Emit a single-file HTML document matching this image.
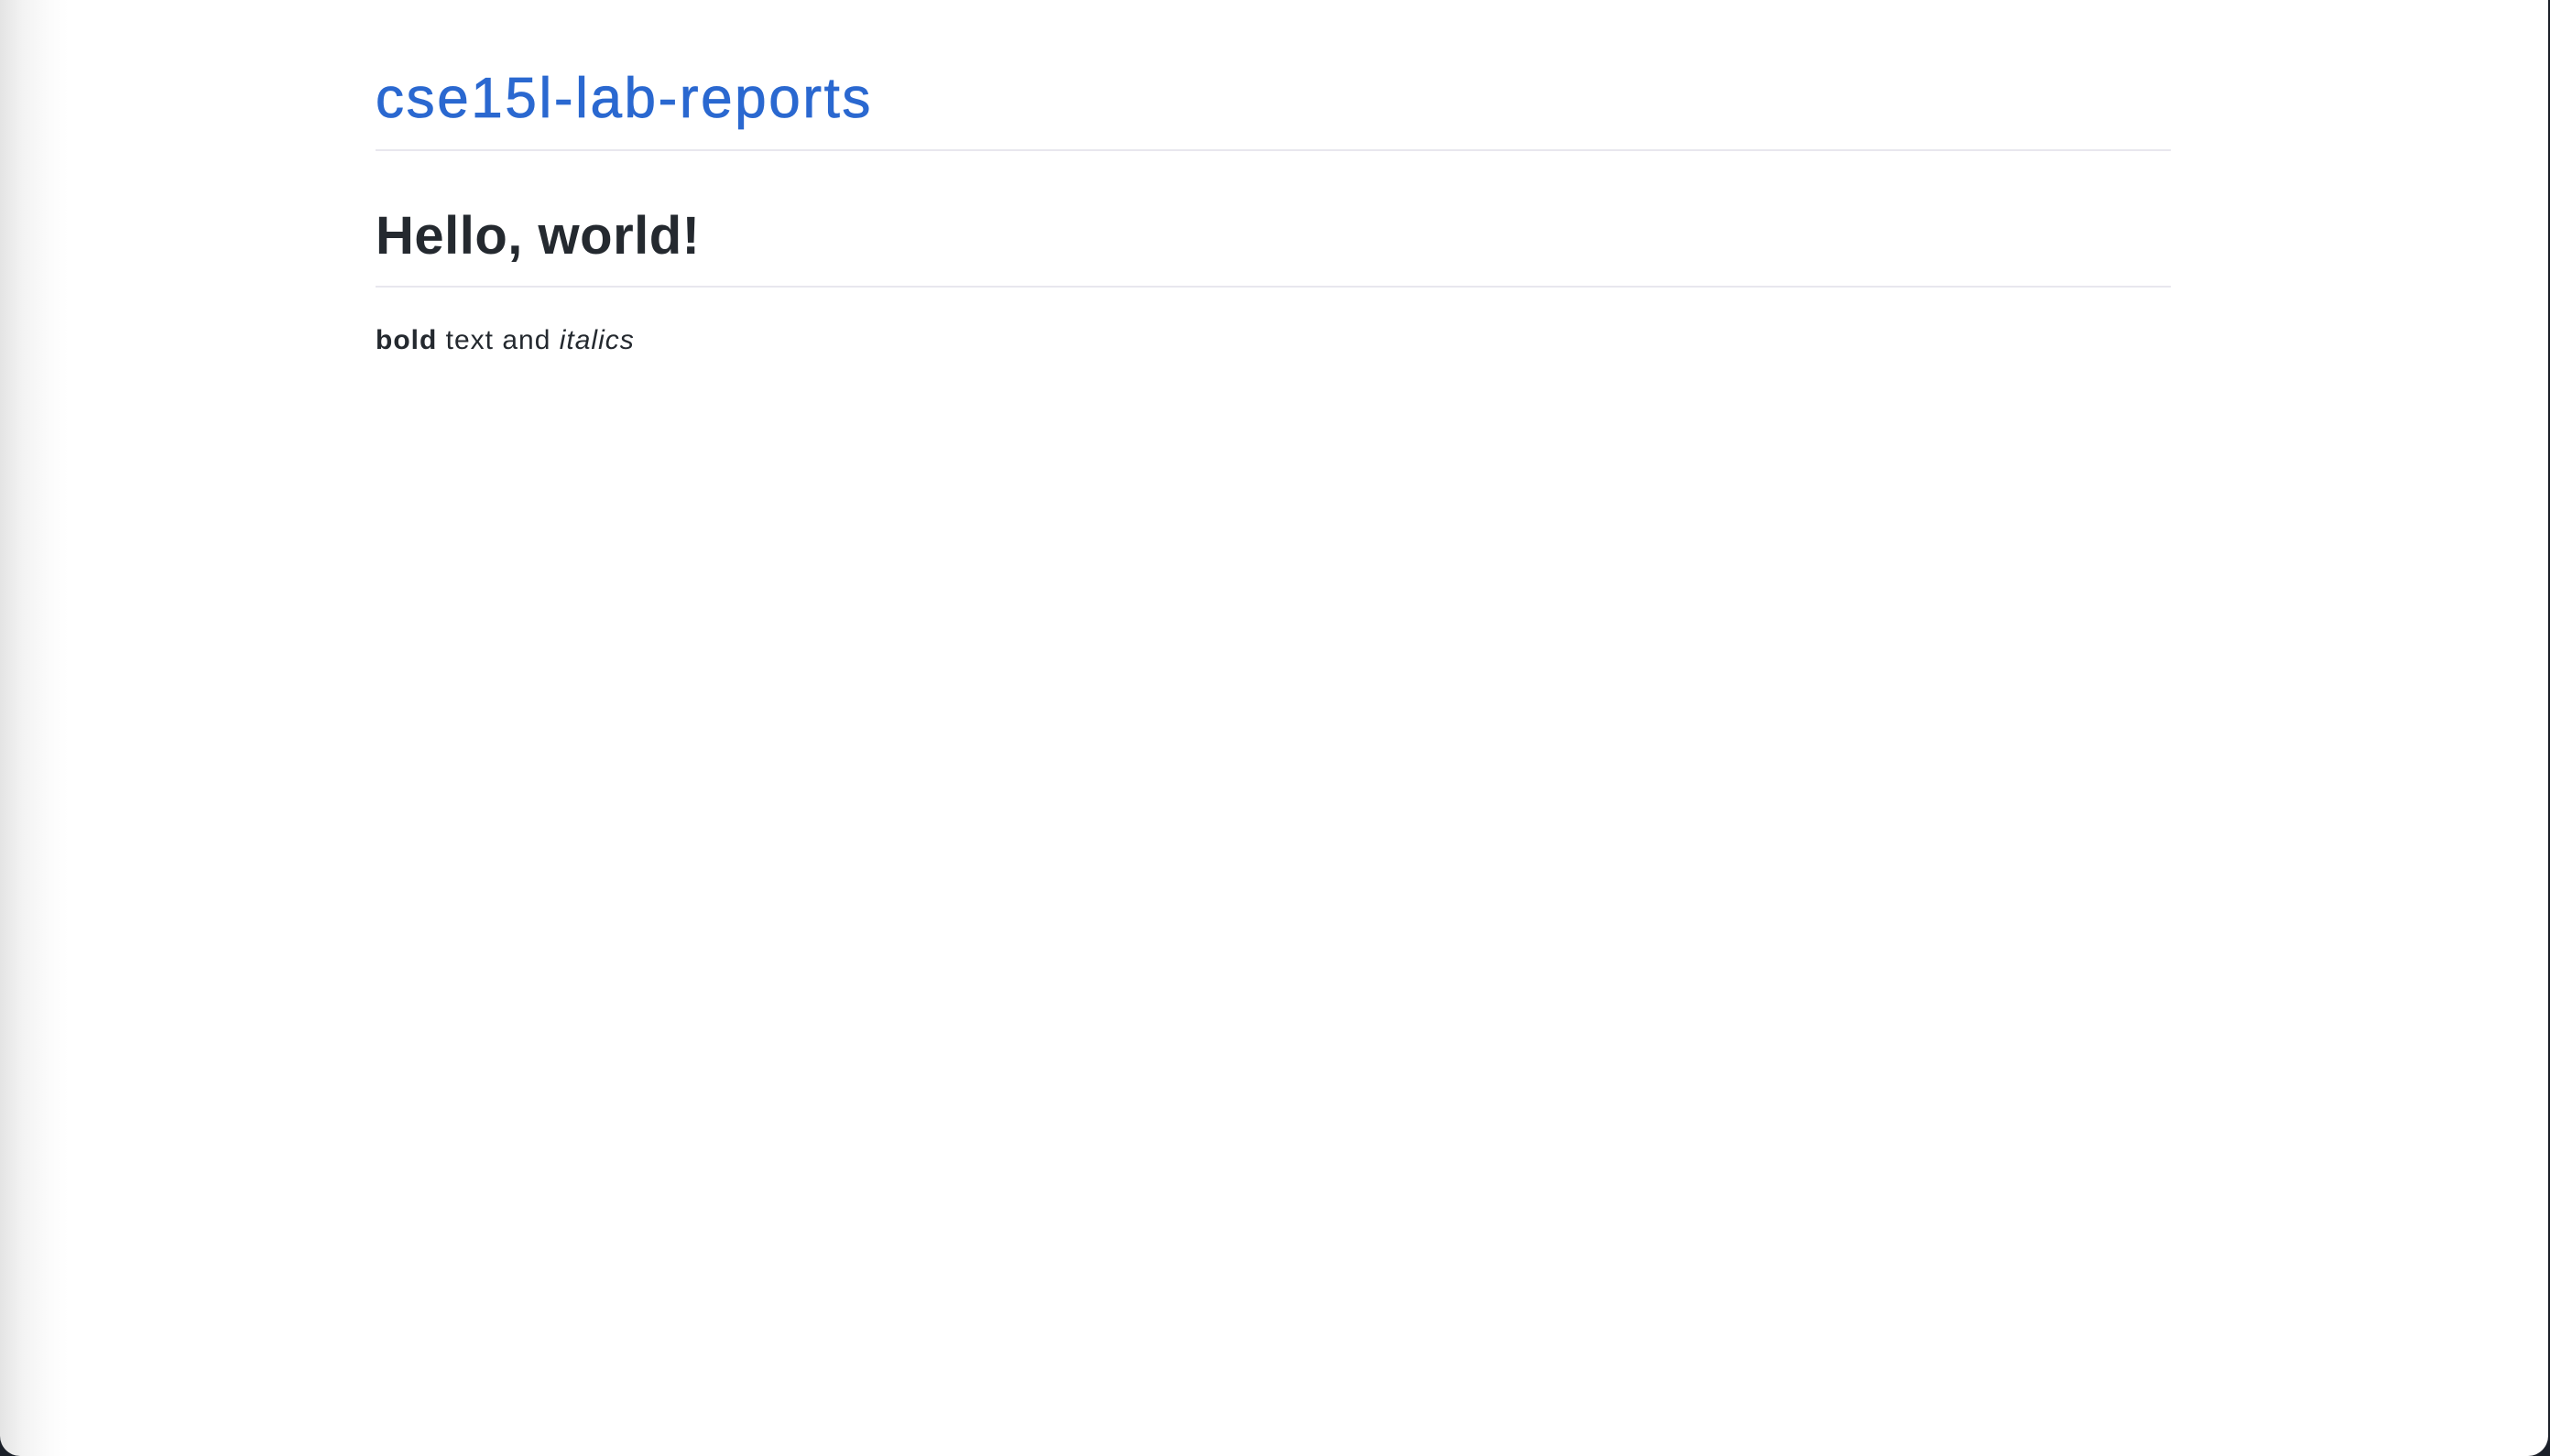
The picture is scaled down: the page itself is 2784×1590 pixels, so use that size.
<!DOCTYPE html>
<html><head><meta charset="utf-8"><style>
html,body{margin:0;padding:0;background:#1b2029;}
.win{position:absolute;left:0;top:0;width:2782px;height:1590px;background:#fff;border-radius:0 0 22px 22px;overflow:hidden;
background:linear-gradient(to right,#e4e4e4 0px,#f3f3f3 25px,#fcfcfc 55px,#fff 75px);}
.t{position:absolute;left:410px;white-space:nowrap;font-family:"Liberation Sans",sans-serif;line-height:1;}
.title{top:77px;font-size:62px;color:#2a68d0;letter-spacing:2.6px;-webkit-text-stroke:0.8px #2a68d0;}
.h1{top:229px;font-size:58px;font-weight:bold;color:#24292f;letter-spacing:0.5px;}
.p{top:357px;font-size:30px;color:#24292f;letter-spacing:1px;}
.hr{position:absolute;left:410px;width:1960px;height:2px;background:#e8e7ee;}
</style></head><body>
<div class="win">
<div class="t title">cse15l-lab-reports</div>
<div class="hr" style="top:163px"></div>
<div class="t h1">Hello, world!</div>
<div class="hr" style="top:312px"></div>
<div class="t p"><b>bold</b> text and <i>italics</i></div>
</div>
</body></html>
